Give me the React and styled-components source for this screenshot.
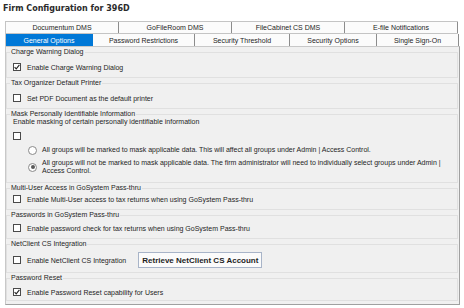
import React from 'react';
import styled, { createGlobalStyle } from 'styled-components';

const GlobalStyle = createGlobalStyle`
  body {
    margin: 0;
    background: #ffffff;
    font-family: "Liberation Sans", Arial, sans-serif;
    color: #1e1e1e;
  }
`;

const Page = styled.div`
  width: 464px;
  height: 308px;
  box-sizing: border-box;
  padding: 3px 4px 0 5px;
  overflow: hidden;
`;

const Title = styled.h1`
  margin: 0 0 6px -2px;
  height: 12px;
  line-height: 12px;
  font-family: "DejaVu Sans", Verdana, sans-serif;
  font-size: 8px;
  font-weight: 700;
  color: #2b2b2b;
`;

const TabStrip = styled.div`
  width: 453px;
  display: flex;
  flex-direction: column;
`;

const TabRow = styled.div`
  display: flex;
  height: ${p => p.$h}px;
  border-top: 1px solid #c4c4c4;
  border-left: 1px solid #c4c4c4;
  background: #fbfbfb;
  box-sizing: border-box;
`;

const Tab = styled.div`
  flex: ${p => (p.$w ? `0 0 ${p.$w}px` : '1')};
  display: flex;
  align-items: center;
  justify-content: center;
  font-size: 7px;
  color: ${p => (p.$active ? '#ffffff' : '#1e1e1e')};
  background: ${p => (p.$active ? '#0078d7' : 'transparent')};
  border-right: 1px solid ${p => (p.$active ? '#0078d7' : '#8c8c8c')};
  box-sizing: border-box;
  white-space: nowrap;
`;

const Panel = styled.div`
  width: 455px;
  box-sizing: border-box;
  background: #f0f0f0;
  border: 1px solid #c8c8c8;
  border-right-color: #a0a0a0;
  border-bottom-color: #a0a0a0;
  padding: 1px 1px 3px 0;
  display: flex;
  flex-direction: column;
  gap: 1px;
`;

const Group = styled.fieldset`
  margin: 0;
  min-width: 0;
  border: 1px solid #e0e0e0;
  padding: ${p => p.$pt}px 6px ${p => p.$pb}px 6px;
  display: flex;
  flex-direction: column;
`;

const Legend = styled.legend`
  margin-left: -3px;
  padding: 0 1px;
  font-size: 7px;
  line-height: 8px;
  color: #1e1e1e;
`;

const Row = styled.label`
  display: flex;
  align-items: center;
  gap: 6px;
  height: ${p => p.$h || 12}px;
  margin-top: ${p => p.$mt || 0}px;
  font-size: 7px;
  white-space: nowrap;
`;

const Note = styled.div`
  font-size: 7px;
  line-height: 8px;
`;

const Box = styled.span`
  width: 8px;
  height: 8px;
  box-sizing: border-box;
  border: 1px solid #4a4a4a;
  background: #ffffff;
  display: inline-flex;
  align-items: center;
  justify-content: center;
  flex: none;
`;

const RadioList = styled.div`
  display: flex;
  flex-direction: column;
  padding-left: 15px;
`;

const RadioRow = styled.label`
  display: flex;
  align-items: center;
  gap: 5px;
  min-height: 12px;
  margin-top: ${p => p.$mt || 0}px;
  font-size: 7px;
  line-height: 8px;
`;

const Dot = styled.span`
  width: 9px;
  height: 9px;
  box-sizing: border-box;
  border-radius: 50%;
  border: 1px solid #8a8a8a;
  background: #ffffff;
  flex: none;
  display: inline-flex;
  align-items: center;
  justify-content: center;
  &::after {
    content: '';
    width: 4px;
    height: 4px;
    border-radius: 50%;
    background: ${p => (p.$on ? '#5a5a5a' : 'transparent')};
  }
`;

const Button = styled.button`
  margin-left: 6px;
  height: 16px;
  padding: 0 3px;
  border: 1px solid #a8b4c8;
  background: #fbfbfb;
  font-family: "Liberation Sans", Arial, sans-serif;
  font-size: 8px;
  font-weight: 700;
  color: #1e1e1e;
  cursor: pointer;
`;

const Check = ({ on }) => (
  <Box>
    {on && (
      <svg width="6" height="6" viewBox="0 0 6 6">
        <path d="M0.6 3.1 L2.2 4.8 L5.4 0.9" fill="none" stroke="#222" strokeWidth="1.1" />
      </svg>
    )}
  </Box>
);

const topTabs = ['Documentum DMS', 'GoFileRoom DMS', 'FileCabinet CS DMS', 'E-file Notifications'];
const bottomTabs = [
  { label: 'General Options', w: 87, active: true },
  { label: 'Password Restrictions', w: 102 },
  { label: 'Security Threshold', w: 95 },
  { label: 'Security Options', w: 87 },
  { label: 'Single Sign-On', w: 82 },
];

const App = () => {
  return (
    <Page>
      <GlobalStyle />
      <Title>Firm Configuration for 396D</Title>
      <TabStrip>
        <TabRow $h={12}>
          {topTabs.map(t => (
            <Tab key={t}>{t}</Tab>
          ))}
        </TabRow>
        <TabRow $h={13}>
          {bottomTabs.map(t => (
            <Tab key={t.label} $w={t.w} $active={t.active}>{t.label}</Tab>
          ))}
        </TabRow>
      </TabStrip>
      <Panel>
        <Group $pt={5} $pb={4}>
          <Legend>Charge Warning Dialog</Legend>
          <Row><Check on />Enable Charge Warning Dialog</Row>
        </Group>
        <Group $pt={5} $pb={4}>
          <Legend>Tax Organizer Default Printer</Legend>
          <Row><Check />Set PDF Document as the default printer</Row>
        </Group>
        <Group $pt={0} $pb={7}>
          <Legend>Mask Personally Identifiable Information</Legend>
          <Note>Enable masking of certain personally identifiable information</Note>
          <Row $mt={4}><Check /></Row>
          <RadioList>
            <RadioRow $mt={2}>
              <Dot />
              All groups will be marked to mask applicable data. This will affect all groups under Admin | Access Control.
            </RadioRow>
            <RadioRow $mt={3}>
              <Dot $on />
              All groups will not be marked to mask applicable data. The firm administrator will need to individually select groups under Admin | Access Control.
            </RadioRow>
          </RadioList>
        </Group>
        <Group $pt={1} $pb={4}>
          <Legend>Multi-User Access in GoSystem Pass-thru</Legend>
          <Row><Check />Enable Multi-User access to tax returns when using GoSystem Pass-thru</Row>
        </Group>
        <Group $pt={3} $pb={4}>
          <Legend>Passwords in GoSystem Pass-thru</Legend>
          <Row><Check />Enable password check for tax returns when using GoSystem Pass-thru</Row>
        </Group>
        <Group $pt={4} $pb={4}>
          <Legend>NetClient CS Integration</Legend>
          <Row $h={16}>
            <Check />Enable NetClient CS Integration
            <Button type="button">Retrieve NetClient CS Account</Button>
          </Row>
        </Group>
        <Group $pt={4} $pb={2}>
          <Legend>Password Reset</Legend>
          <Row><Check on />Enable Password Reset capability for Users</Row>
        </Group>
      </Panel>
    </Page>
  );
};

export default App;
